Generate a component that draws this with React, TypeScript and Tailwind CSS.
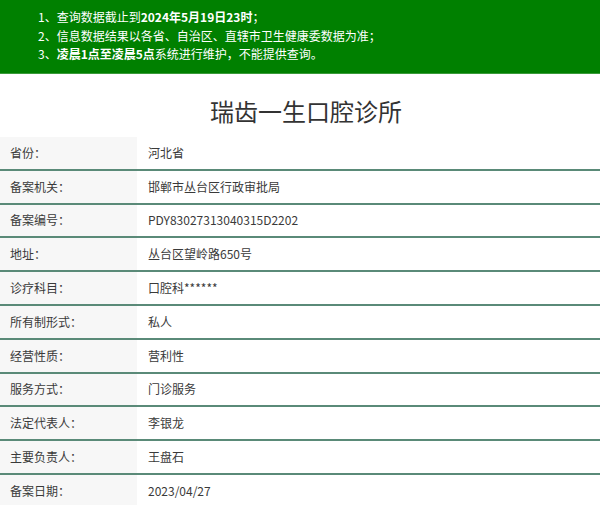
const rows: [string, string][] = [
  ['省份：', '河北省'],
  ['备案机关：', '邯郸市丛台区行政审批局'],
  ['备案编号：', 'PDY83027313040315D2202'],
  ['地址：', '丛台区望岭路650号'],
  ['诊疗科目：', '口腔科******'],
  ['所有制形式：', '私人'],
  ['经营性质：', '营利性'],
  ['服务方式：', '门诊服务'],
  ['法定代表人：', '李银龙'],
  ['主要负责人：', '王盘石'],
  ['备案日期：', '2023/04/27'],
]

export default function App() {
  return (
    <div
      className="w-[600px] h-[505px] overflow-hidden bg-white text-[#3a3a3a]"
      style={{ fontFamily: '"Microsoft YaHei", "Noto Sans CJK SC", sans-serif' }}
    >
      <div className="h-[74px] bg-[#008000] border-b border-[#3a9a3a] pl-[38px] pt-[8px] text-[12px] leading-[18.5px] text-white">
        <p>1、查询数据截止到<b>2024年5月19日23时</b>；</p>
        <p>2、信息数据结果以各省、自治区、直辖市卫生健康委数据为准；</p>
        <p>3、<b>凌晨1点至凌晨5点</b>系统进行维护，不能提供查询。</p>
      </div>

      <h1 className="h-[63px] pt-[21px] pl-[12px] text-center text-[24px] leading-[32px] text-[#333]">
        瑞齿一生口腔诊所
      </h1>

      <div>
        {rows.map(([label, value]) => (
          <div key={label} className="flex h-[33.8px] border-b-2 border-[#5a8a78] text-[12px]">
            <div className="w-[137px] bg-[#f7f7f7] pl-[10px] flex items-center">{label}</div>
            <div className="flex-1 pl-[11px] flex items-center">{value}</div>
          </div>
        ))}
      </div>
    </div>
  )
}
